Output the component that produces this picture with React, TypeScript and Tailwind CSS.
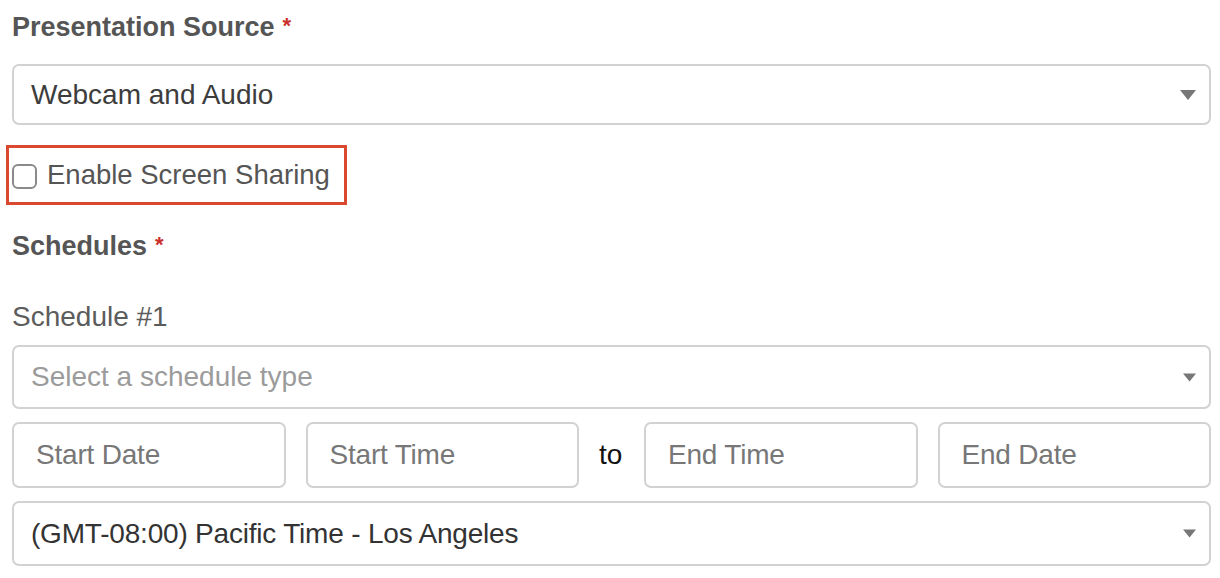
import React from 'react';

const font = { fontFamily: '"Liberation Sans", Arial, sans-serif' };

const Caret = ({ small }: { small?: boolean }) => (
  <svg
    className={small ? 'w-[13px] h-[9px] shrink-0' : 'w-[16px] h-[10px] shrink-0'}
    viewBox="0 0 16 10"
  >
    <path d="M0 0 L16 0 L8 10 Z" fill="#777" />
  </svg>
);

interface SelectBoxProps {
  value: string;
  placeholder?: boolean;
  className?: string;
  small?: boolean;
}

const SelectBox = ({ value, placeholder, className, small }: SelectBoxProps) => (
  <div
    className={
      'flex items-center justify-between border-2 border-[#d2d2d2] rounded-[7px] bg-white pl-[17px] pr-[13px] ' +
      (className ?? '')
    }
  >
    <span className={placeholder ? 'text-[#9b9b9b] text-[28px]' : 'text-[#3d3d3d] text-[28px]'}>{value}</span>
    <Caret small={small} />
  </div>
);

const TextBox = ({ placeholder }: { placeholder: string }) => (
  <div className="flex-1 h-[66px] flex items-center border-2 border-[#d2d2d2] rounded-[7px] bg-white px-[22px]">
    <span className="text-[#777] text-[28px] tracking-[-0.2px]">{placeholder}</span>
  </div>
);

const Required = () => (
  <span className="text-[#c9302c] text-[22px] leading-none font-bold ml-[8px] relative -top-[3px]">*</span>
);

export default function App() {
  return (
    <div className="w-[1220px] h-[578px] bg-white overflow-hidden pl-3 pr-[9px] pt-3" style={font}>
      <div className="text-[27px] leading-[30px] font-bold text-[#555]">
        Presentation Source<Required />
      </div>

      <SelectBox value="Webcam and Audio" className="mt-[22px] h-[61px]" />

      <div className="mt-[20px] -ml-[6px] w-[341px] h-[60px] border-[3px] border-[#d9482f] flex items-center pl-[3px]">
        <div className="w-[25px] h-[25px] border-2 border-[#8a8a8a] rounded-[6px] bg-white mt-[2px]" />
        <span className="ml-[10px] text-[27.5px] text-[#555]">Enable Screen Sharing</span>
      </div>

      <div className="mt-[26px] text-[27px] leading-[30px] font-bold text-[#555]">
        Schedules<Required />
      </div>

      <div className="mt-[41px] text-[28px] leading-[30px] text-[#5c5c5c]">Schedule #1</div>

      <SelectBox value="Select a schedule type" placeholder className="mt-[13px] h-[64px]" small />

      <div className="mt-[13px] flex items-center gap-5">
        <TextBox placeholder="Start Date" />
        <TextBox placeholder="Start Time" />
        <span className="w-[25px] text-[28px] text-[#111]">to</span>
        <TextBox placeholder="End Time" />
        <TextBox placeholder="End Date" />
      </div>

      <div className="mt-[13px] h-[65px] flex items-center justify-between border-2 border-[#d2d2d2] rounded-[7px] bg-white pl-[17px] pr-[13px]">
        <span className="text-[#333] text-[28px] tracking-[-0.2px]">(GMT-08:00) Pacific Time - Los Angeles</span>
        <Caret small />
      </div>
    </div>
  );
}
